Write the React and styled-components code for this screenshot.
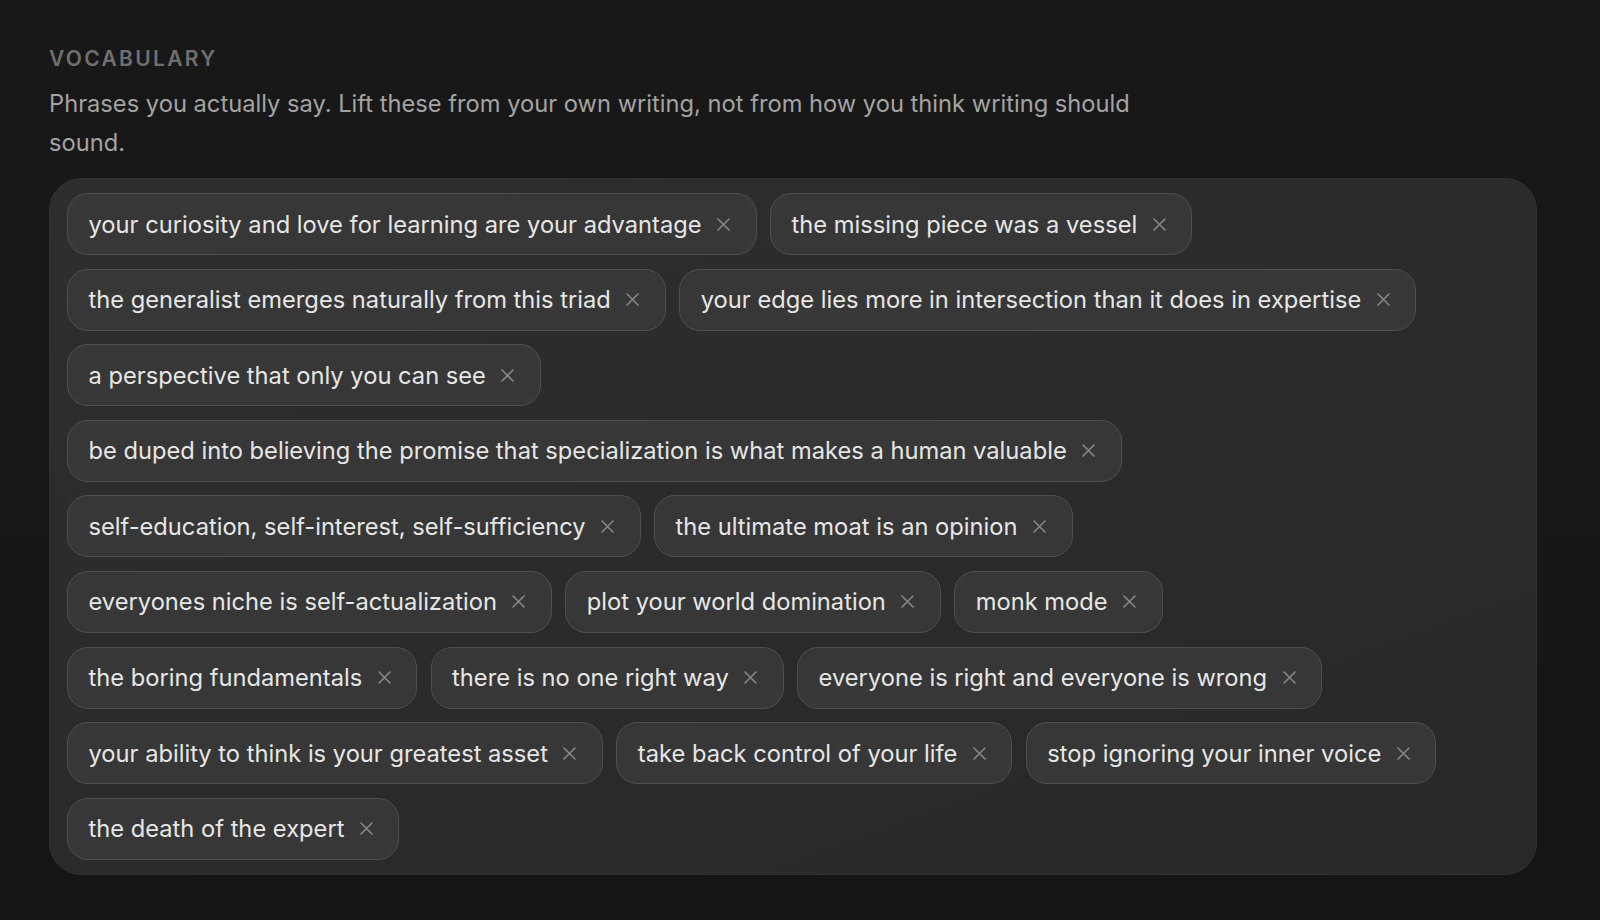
import React, { useState } from 'react';
import styled, { createGlobalStyle } from 'styled-components';

const GlobalStyle = createGlobalStyle`
  html, body {
    margin: 0;
    padding: 0;
    background: #161616;
  }
  body {
    font-family: Inter, "Noto Sans", "Liberation Sans", sans-serif;
    -webkit-font-smoothing: antialiased;
  }
`;

const Page = styled.div`
  min-height: 920px;
  box-sizing: border-box;
  padding: 46px 0 0 49px;
  background: linear-gradient(180deg, #181818 0%, #151515 100%);
`;

const Section = styled.section`
  width: 1488px;
  display: flex;
  flex-direction: column;
`;

const Label = styled.div`
  font-size: 21px;
  line-height: 26px;
  font-weight: 600;
  letter-spacing: 0.11em;
  color: #6f6f6f;
  text-transform: uppercase;
`;

const Description = styled.p`
  margin: 12px 0 16px;
  max-width: 1120px;
  font-size: 23.7px;
  line-height: 39px;
  color: #a3a3a3;
`;

const TagBox = styled.div`
  box-sizing: border-box;
  display: flex;
  flex-wrap: wrap;
  align-content: flex-start;
  gap: 13.6px 13.4px;
  padding: 14px 17px 14px;
  border: 1px solid #313131;
  border-radius: 32px;
  background: linear-gradient(160deg, #2e2e2e 0%, #2b2b2b 45%, #282828 100%);
`;

const Chip = styled.div`
  box-sizing: border-box;
  height: 62px;
  display: flex;
  align-items: center;
  gap: 15px;
  padding: 0 25px 0 20.5px;
  border: 1px solid #4f4f4f;
  border-radius: 21px;
  background: #373737;
  color: #e6e6e6;
  font-size: 23.7px;
  white-space: nowrap;
`;

const Remove = styled.button`
  display: flex;
  align-items: center;
  justify-content: center;
  width: 14px;
  height: 14px;
  padding: 0;
  border: none;
  background: none;
  color: #878787;
  cursor: pointer;
`;

const XIcon = () => (
  <svg width="13" height="13" viewBox="0 0 13 13" fill="none">
    <path d="M1 1L12 12M12 1L1 12" stroke="currentColor" strokeWidth="1.6" strokeLinecap="round" />
  </svg>
);

const initialPhrases = [
  'your curiosity and love for learning are your advantage',
  'the missing piece was a vessel',
  'the generalist emerges naturally from this triad',
  'your edge lies more in intersection than it does in expertise',
  'a perspective that only you can see',
  'be duped into believing the promise that specialization is what makes a human valuable',
  'self-education, self-interest, self-sufficiency',
  'the ultimate moat is an opinion',
  'everyones niche is self-actualization',
  'plot your world domination',
  'monk mode',
  'the boring fundamentals',
  'there is no one right way',
  'everyone is right and everyone is wrong',
  'your ability to think is your greatest asset',
  'take back control of your life',
  'stop ignoring your inner voice',
  'the death of the expert',
];

const App = () => {
  const [phrases, setPhrases] = useState(initialPhrases);
  const remove = (p) => setPhrases(phrases.filter((x) => x !== p));

  return (
    <Page>
      <GlobalStyle />
      <Section>
        <Label>Vocabulary</Label>
        <Description>
          Phrases you actually say. Lift these from your own writing, not from how you think writing should sound.
        </Description>
        <TagBox>
          {phrases.map((p) => (
            <Chip key={p}>
              <span>{p}</span>
              <Remove onClick={() => remove(p)} aria-label="remove">
                <XIcon />
              </Remove>
            </Chip>
          ))}
        </TagBox>
      </Section>
    </Page>
  );
};

export default App;
